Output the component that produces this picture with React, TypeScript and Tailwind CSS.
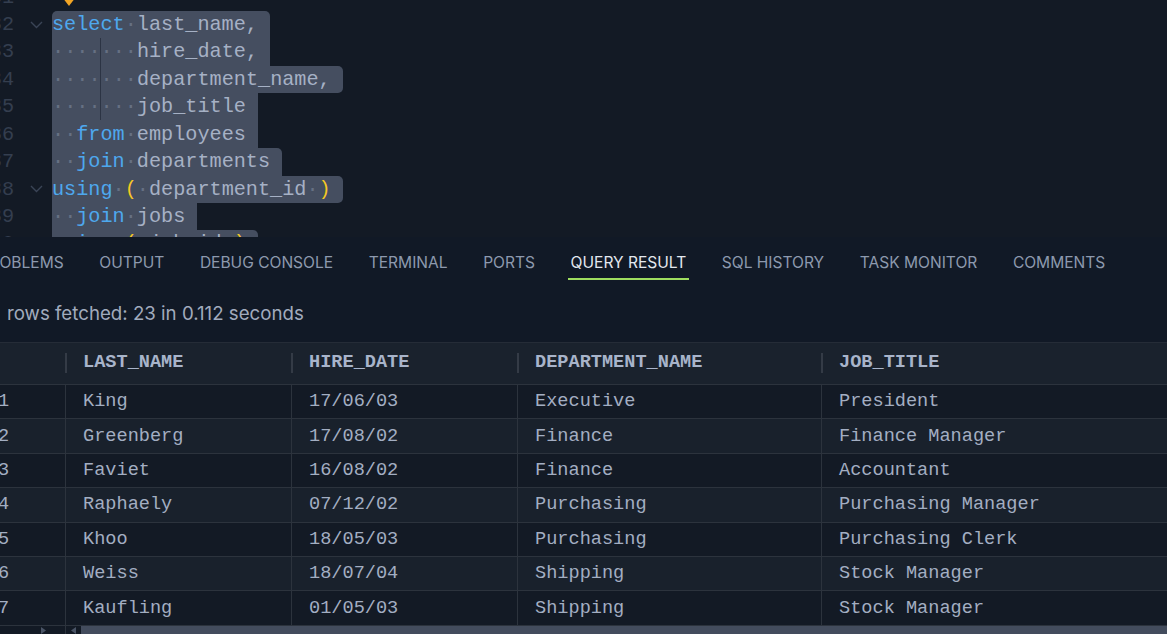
import React from "react";

const KEYWORDS = new Set(["select", "from", "join", "using"]);

interface CodeLine {
  num: number;
  text: string;
  fold?: boolean;
  sel?: string; // selection width + corner classes
}

const codeLines: CodeLine[] = [
  { num: 31, text: "" },
  { num: 32, text: "select last_name,", fold: true, sel: "w-[18ch] rounded-tl-[5px] rounded-tr-[5px]" },
  { num: 33, text: "       hire_date,", sel: "w-[18ch]" },
  { num: 34, text: "       department_name,", sel: "w-[24ch] rounded-tr-[5px] rounded-br-[5px]" },
  { num: 35, text: "       job_title", sel: "w-[17ch]" },
  { num: 36, text: "  from employees", sel: "w-[17ch]" },
  { num: 37, text: "  join departments", sel: "w-[19ch] rounded-tr-[5px]" },
  { num: 38, text: "using ( department_id )", fold: true, sel: "w-[24ch] rounded-tr-[5px] rounded-br-[5px]" },
  { num: 39, text: "  join jobs", sel: "w-[12ch]" },
  { num: 40, text: "using ( job_id )", sel: "w-[17ch] rounded-tr-[5px]" },
];

function renderTokens(text: string) {
  const parts = text.match(/[A-Za-z_]+|\s|\(|\)|,/g) ?? [];
  return parts.map((p, i) => {
    if (p === " ") return <span key={i} className="text-[#667083]">·</span>;
    if (KEYWORDS.has(p)) return <span key={i} className="text-[#4ea8ee]">{p}</span>;
    if (p === "(" || p === ")") return <span key={i} className="text-[#f5c824]">{p}</span>;
    return <span key={i} className="text-[#a6b1c5]">{p}</span>;
  });
}

const tabs = ["PROBLEMS", "OUTPUT", "DEBUG CONSOLE", "TERMINAL", "PORTS", "QUERY RESULT", "SQL HISTORY", "TASK MONITOR", "COMMENTS"];

const columns = ["LAST_NAME", "HIRE_DATE", "DEPARTMENT_NAME", "JOB_TITLE"];

const rows = [
  ["King", "17/06/03", "Executive", "President"],
  ["Greenberg", "17/08/02", "Finance", "Finance Manager"],
  ["Faviet", "16/08/02", "Finance", "Accountant"],
  ["Raphaely", "07/12/02", "Purchasing", "Purchasing Manager"],
  ["Khoo", "18/05/03", "Purchasing", "Purchasing Clerk"],
  ["Weiss", "18/07/04", "Shipping", "Stock Manager"],
  ["Kaufling", "01/05/03", "Shipping", "Stock Manager"],
];

const mono = "font-['Liberation_Mono',monospace]";
const sans = "font-['Inter','Noto_Sans',sans-serif]";

function Editor() {
  return (
    <div className={`relative h-[237px] shrink-0 overflow-hidden bg-[#131a25] ${mono} text-[20.2px] leading-[27.43px]`}>
      <div className="mt-[-16.4px] flex flex-col">
        {codeLines.map((line) => (
          <div key={line.num} className="flex h-[27.43px] whitespace-pre">
            {/* gutter */}
            <div className="flex w-[52px] shrink-0 items-center">
              <span className="ml-[-26px] w-[40px] shrink-0 text-right text-[#343e4f]">{line.num}</span>
              <span className="ml-[16px] flex w-[13px] shrink-0 items-center justify-center">
                {line.fold && (
                  <svg width="13" height="8" viewBox="0 0 13 8" fill="none">
                    <polyline points="1,1 6.5,6.5 12,1" stroke="#3a4456" strokeWidth="1.4" />
                  </svg>
                )}
              </span>
            </div>
            {/* content */}
            <div className="flex-1">
              {line.sel ? (
                <span className={`inline-block h-full bg-[#454e60] ${line.sel}`}>{renderTokens(line.text)}</span>
              ) : (
                <span>{line.text}</span>
              )}
            </div>
          </div>
        ))}
      </div>
      {/* code action marker */}
      <svg className="absolute left-[64px] top-[-7px]" width="10" height="13" viewBox="0 0 10 13">
        <polygon points="5,0 10,6.5 5,13 0,6.5" fill="#f2a524" />
      </svg>
      {/* indent guide */}
      <div className="absolute left-[100px] top-[38px] h-[82px] w-px bg-[#2c3444]" />
    </div>
  );
}

function Tabs() {
  return (
    <div className={`ml-[-23.5px] flex gap-[29.6px] pt-[14px] ${sans} text-[15.55px] leading-[24px]`}>
      {tabs.map((t) => {
        const active = t === "QUERY RESULT";
        return (
          <div
            key={t}
            className={`shrink-0 whitespace-nowrap border-b-2 px-[3px] pb-[3px] ${
              active ? "border-[#9fdd5f] text-[#e3e8ef]" : "border-transparent text-[#8d99ae]"
            }`}
          >
            {t}
          </div>
        );
      })}
    </div>
  );
}

function ResultTable() {
  return (
    <div className={`mt-[15px] flex flex-col ${mono} text-[18.6px]`}>
      {/* header */}
      <div className="grid h-[43px] shrink-0 grid-cols-[65px_226px_226px_304px_1fr] border-y border-t-[#252c37] border-b-[#2c333d] bg-[#1a222d] font-bold text-[#a8b4ca]">
        <div />
        {columns.map((c) => (
          <div key={c} className="relative flex items-center pb-[2px] pl-[18px]">
            <div className="absolute left-0 top-[10px] h-[20px] w-[2px] bg-[#343b46]" />
            {c}
          </div>
        ))}
      </div>
      {/* body */}
      {rows.map((r, i) => (
        <div
          key={i}
          className={`grid h-[34.4px] shrink-0 grid-cols-[65px_226px_226px_304px_1fr] border-b border-[#2c333d] text-[#a3aec2] ${
            i % 2 === 0 ? "bg-[#131a25]" : "bg-[#19212c]"
          }`}
        >
          <div className="flex items-center pl-0 pt-[1px]">
            <span className="ml-[-2px]">{i + 1}</span>
          </div>
          {r.map((v, j) => (
            <div key={j} className="flex items-center whitespace-pre border-l border-[#2c333d] pl-[17px] pt-[1px]">
              {v}
            </div>
          ))}
        </div>
      ))}
      {/* horizontal scrollbar */}
      <div className="flex h-[10px] shrink-0">
        <div className="flex w-[65px] items-center bg-[#131a25] pl-[41px]">
          <svg width="5" height="7" viewBox="0 0 5 7">
            <polygon points="0,0 5,3.5 0,7" fill="#4a5466" />
          </svg>
        </div>
        <div className="w-px bg-[#2c333d]" />
        <div className="flex w-[15px] items-center bg-[#131a25] pl-[5px]">
          <svg width="5" height="7" viewBox="0 0 5 7">
            <polygon points="5,0 0,3.5 5,7" fill="#4a5466" />
          </svg>
        </div>
        <div className="flex-1 bg-[#434c5d]" />
      </div>
    </div>
  );
}

export default function App() {
  return (
    <div className="flex h-[634px] w-[1167px] flex-col overflow-hidden bg-[#111926]">
      <Editor />
      <div className="flex flex-1 flex-col overflow-hidden">
        <Tabs />
        <div className={`mt-[21px] pl-[7px] ${sans} text-[18.7px] leading-[26px] text-[#a1abbd]`}>
          rows fetched: 23 in 0.112 seconds
        </div>
        <ResultTable />
      </div>
    </div>
  );
}
